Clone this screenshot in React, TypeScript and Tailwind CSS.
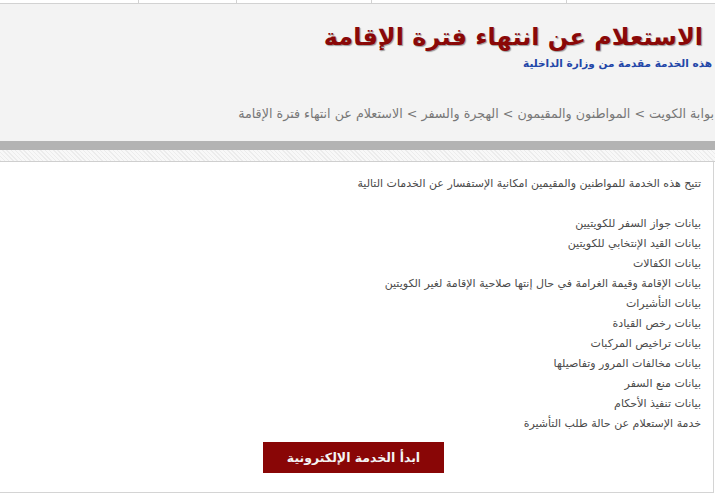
const items = [
  "بيانات جواز السفر للكويتيين",
  "بيانات القيد الإنتخابي للكويتين",
  "بيانات الكفالات",
  "بيانات الإقامة وقيمة الغرامة في حال إنتها صلاحية الإقامة لغير الكويتين",
  "بيانات التأشيرات",
  "بيانات رخص القيادة",
  "بيانات تراخيص المركبات",
  "بيانات مخالفات المرور وتفاصيلها",
  "بيانات منع السفر",
  "بيانات تنفيذ الأحكام",
  "خدمة الإستعلام عن حالة طلب التأشيرة",
]

export default function App() {
  return (
    <div className="w-[715px] min-h-[493px] bg-white font-['DejaVu_Sans',sans-serif]">
      {/* top nav strip */}
      <div className="flex h-[4px] border-b border-[#d2d2d2] bg-white">
        <div className="w-[138px]" />
        <div className="w-[98px] border-l border-[#d2d2d2]" />
        <div className="w-[135px] border-l border-[#d2d2d2]" />
        <div className="w-[195px] border-l border-[#d2d2d2]" />
        <div className="flex-1 border-l border-[#d2d2d2]" />
      </div>

      {/* page header */}
      <div dir="rtl" className="h-[137px] bg-[#f3f3f3] pt-[15px]">
        <h1 className="pr-[12px] text-[24px] font-bold leading-[36px] text-[#8a0808] [text-shadow:1px_1px_1px_#9a9a9a]">
          الاستعلام عن انتهاء فترة الإقامة
        </h1>
        <p className="pr-[3px] text-[10.5px] font-bold leading-[16px] text-[#2347a8]">
          هذه الخدمة مقدمة من وزارة الداخلية
        </p>
        <p className="mt-[33px] pr-[1px] text-[12.7px] leading-[20px] text-[#777777]">
          بوابة الكويت &gt; المواطنون والمقيمون &gt; الهجرة والسفر &gt; الاستعلام عن انتهاء فترة الإقامة
        </p>
      </div>
      <div className="h-[9px] bg-[#b3b3b3]" />
      <div className="h-[12px] border-b border-[#cfcfcf] bg-[#f6f6f6] bg-[repeating-linear-gradient(45deg,#ececec_0px,#ececec_1px,#f8f8f8_1px,#f8f8f8_3px)]" />

      {/* content */}
      <div dir="rtl" className="w-[714px] border-b border-r border-[#d4d4d4] bg-white pt-[12px] pb-[19px] pr-[12px] text-[11px] leading-[20px] text-[#4a4a4a]">
        <p>تتيح هذه الخدمة للمواطنين والمقيمين امكانية الإستفسار عن الخدمات التالية</p>
        <div className="mt-[20px] flex flex-col">
          {items.map((t) => (
            <p key={t}>{t}</p>
          ))}
        </div>
        <div className="mt-[8px] flex justify-center pl-[6px]">
          <button className="h-[31px] w-[181px] bg-[#890606] text-[12.5px] font-bold text-[#f4f4f4]">
            ابدأ الخدمة الإلكترونية
          </button>
        </div>
      </div>
    </div>
  )
}
